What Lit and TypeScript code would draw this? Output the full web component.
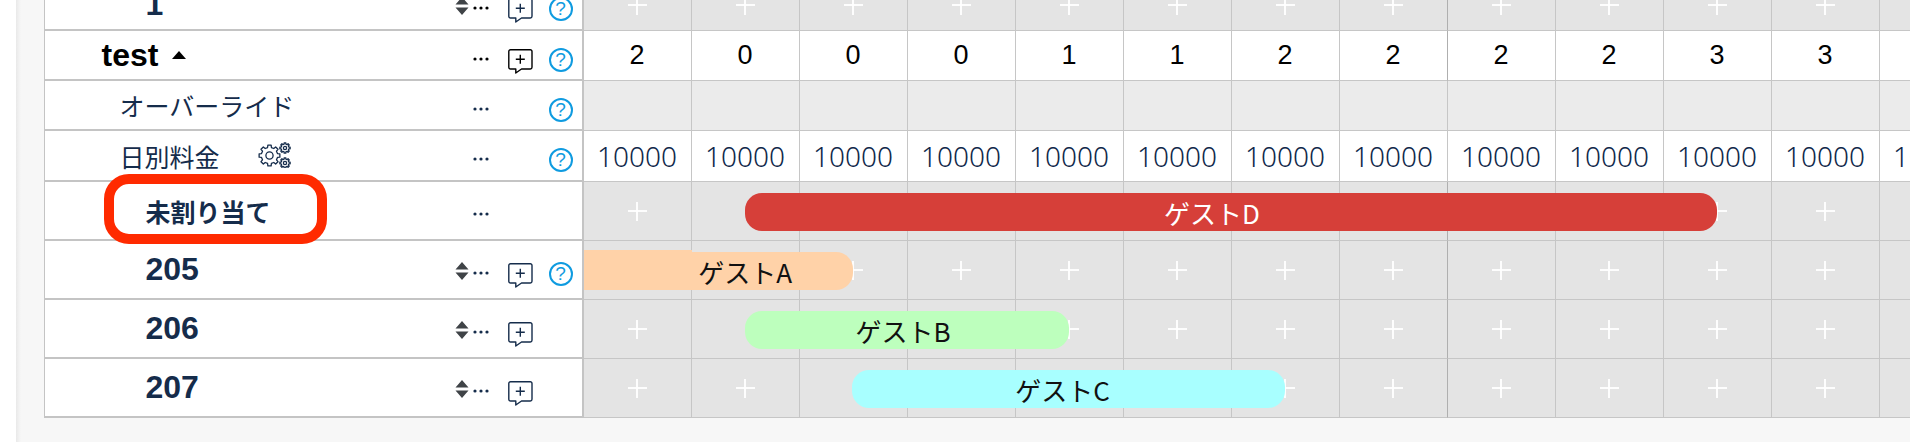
import { LitElement, html, css, svg } from "lit";
import { customElement } from "lit/decorators.js";

const COLS = 13;
const range = Array.from({ length: COLS }, (_, i) => i);

function gear(cx: number, cy: number, rOut: number, rIn: number, teeth: number, hole: number) {
  const pts: string[] = [];
  const step = (Math.PI * 2) / teeth;
  for (let i = 0; i < teeth; i++) {
    const a = i * step;
    const w = step * 0.2;
    const p = (r: number, t: number) =>
      `${(cx + r * Math.cos(t)).toFixed(2)} ${(cy + r * Math.sin(t)).toFixed(2)}`;
    pts.push(p(rIn, a - w * 1.5), p(rOut, a - w), p(rOut, a + w), p(rIn, a + w * 1.5));
  }
  return svg`<path d="M${pts.join("L")}Z"/><circle cx=${cx} cy=${cy} r=${hole}/>`;
}

const sortIcon = html`<svg class="sort" width="14" height="18" viewBox="0 0 14 18"><path d="M7 0 13.500 7.500H.5ZM7 18 .5 10.500H13.500Z" fill="#3f4347"/></svg>`;
const dots = html`<svg class="dots" width="16" height="4" viewBox="0 0 16 4"><g fill="currentColor"><circle cx="2" cy="2" r="1.600"/><circle cx="8" cy="2" r="1.600"/><circle cx="14" cy="2" r="1.600"/></g></svg>`;
const bubble = html`<svg class="bubble" width="25" height="25" viewBox="0 0 25 25"><path d="M2.500 .8H22.300a1.700 1.700 0 0 1 1.700 1.700V18.300a1.700 1.700 0 0 1-1.700 1.700H13.500L7.800 24V20H2.500A1.700 1.700 0 0 1 .8 18.300V2.500A1.700 1.700 0 0 1 2.500 .8Z" fill="none" stroke="currentColor" stroke-width="1.400" stroke-linejoin="round"/><path d="M12.300 5.700V14.700M7.800 10.200H16.800" fill="none" stroke="currentColor" stroke-width="1.400"/></svg>`;
const help = html`<span class="help">?</span>`;
const gears = html`<svg class="gears" width="33" height="26" viewBox="0 0 33 26" fill="none" stroke="#152c4b" stroke-width="1.300" stroke-linejoin="round">${gear(11.500, 13.500, 10.500, 8.200, 8, 3.600)}${gear(27, 6, 5.200, 3.900, 8, 1.600)}${gear(27, 21, 5.200, 3.900, 8, 1.600)}</svg>`;

interface Row {
  cls: string;
  name: string;
  nameCls: string;
  sort?: boolean;
  bub?: boolean;
  hlp?: boolean;
  gear?: boolean;
  caret?: boolean;
  kind: "plus" | "values" | "blank" | "rates";
  values?: number[];
  skip?: number;
}

const rows: Row[] = [
  { cls: "r-top", name: "1", nameCls: "room", sort: true, bub: true, hlp: true, kind: "plus" },
  { cls: "r-head", name: "test", nameCls: "group", bub: true, hlp: true, caret: true, kind: "values", values: [2, 0, 0, 0, 1, 1, 2, 2, 2, 2, 3, 3, 3] },
  { cls: "r-sub", name: "オーバーライド", nameCls: "sub", hlp: true, kind: "blank" },
  { cls: "r-rate", name: "日別料金", nameCls: "sub", hlp: true, gear: true, kind: "rates" },
  { cls: "r-room", name: "未割り当て", nameCls: "room small", kind: "plus", skip: 1 },
  { cls: "r-room", name: "205", nameCls: "room", sort: true, bub: true, hlp: true, kind: "plus" },
  { cls: "r-room", name: "206", nameCls: "room", sort: true, bub: true, kind: "plus", skip: 1 },
  { cls: "r-room", name: "207", nameCls: "room", sort: true, bub: true, kind: "plus", skip: 2 },
];

const bars = [
  { name: "", left: 540, top: 250, width: 108, height: 40, color: "#ffd2a8", text: "#111", shift: 0, cls: "flat" },
  { name: "ゲストA", left: 540, top: 252, width: 269.5, height: 38, color: "#ffd2a8", text: "#111", shift: 27, cls: "open" },
  { name: "ゲストD", left: 701.500, top: 193, width: 972, height: 38, color: "#d63f39", text: "#fff", shift: -19, cls: "" },
  { name: "ゲストB", left: 701.500, top: 311, width: 324, height: 38, color: "#bdffbd", text: "#111", shift: -4, cls: "" },
  { name: "ゲストC", left: 808.500, top: 370, width: 433, height: 38, color: "#a8ffff", text: "#111", shift: -6, cls: "" },
];

@customElement("app-root")
export class AppRoot extends LitElement {
  static styles = css`
    :host {
      display: block;
      width: 1910px;
      height: 442px;
      overflow: hidden;
      background: #fff;
      font-family: "Liberation Sans", "Noto Sans CJK JP", sans-serif;
    }
    .page {
      margin-left: 16px;
      height: 442px;
      background: linear-gradient(90deg, #e9e9e9 0, #f7f7f7 5px);
      padding-left: 27.500px;
      box-sizing: border-box;
      overflow: hidden;
    }
    .table {
      position: relative;
      width: 1866.500px;
      overflow: hidden;
    }
    .row {
      display: grid;
      grid-template-columns: 540px repeat(${COLS}, 108px);
      box-sizing: border-box;
    }
    .r-top { height: 55px; margin-top: -24px; padding-top: 4px; }
    .r-head { height: 50px; }
    .r-sub { height: 50px; }
    .r-rate { height: 51px; }
    .r-room { height: 59px; }
    .left {
      display: grid;
      grid-template-columns: 410px 18.500px 34.500px 41px 24.500px;
      align-items: center;
      background: #fff;
      border-left: 1.500px solid #c4c4c4;
      border-right: 2px solid #c4c4c4;
      border-bottom: 2px solid #c4c4c4;
      box-sizing: border-box;
      color: #152c4b;
      min-width: 0;
    }
    .name { display: flex; align-items: center; white-space: nowrap; }
    .name.group { padding-left: 57px; font-size: 32px; font-weight: 700; color: #000; }
    .name.sub { padding-left: 75px; font-size: 25px; font-family: "Noto Sans CJK JP", sans-serif; font-weight: 400; }
    .name.room { padding-left: 101px; font-size: 32px; font-weight: 700; }
    .name.small { font-size: 25px; font-family: "Noto Sans CJK JP", sans-serif; }
    .caret {
      width: 0;
      height: 0;
      margin-left: 14px;
      border-left: 7.500px solid transparent;
      border-right: 7.500px solid transparent;
      border-bottom: 8px solid #000;
    }
    .gears { margin-left: 38.500px; margin-top: -2px; }
    .sort, .dots, .bubble { display: block; }
    .sort { margin-top: 2px; }
    .dots { margin-top: 7px; }
    .bubble { margin-top: 12px; color: #152c4b; }
    .r-head .bubble, .r-head .dots, .r-top .dots { color: #000; }
    .help {
      display: block;
      width: 24px;
      height: 24px;
      margin-top: 9px;
      box-sizing: border-box;
      border: 2px solid #0f9be0;
      border-radius: 50%;
      color: #0f9be0;
      font-size: 19px;
      line-height: 20px;
      text-align: center;
    }
    .cell {
      display: flex;
      align-items: center;
      justify-content: center;
      border-right: 1px solid #c6c6c6;
      border-bottom: 1px solid #c6c6c6;
      box-sizing: border-box;
      min-width: 0;
    }
    .cell.month { border-right: 1.500px solid #afafaf; }
    .cell.plus { background: #e4e4e4; }
    .cell.blank { background: #ebebeb; }
    .cell.values { background: #fff; font-size: 27px; color: #000; }
    .cell.rates { background: #fff; font-size: 28px; color: #10284a; font-family: "Noto Sans", sans-serif; font-weight: 300; }
    .plus-mark { position: relative; width: 19px; height: 19px; }
    .plus-mark::before, .plus-mark::after { content: ""; position: absolute; background: #fff; opacity: .92; }
    .plus-mark::before { left: 0; right: 0; top: 8.500px; height: 2px; }
    .plus-mark::after { top: 0; bottom: 0; left: 8.500px; width: 2px; }
    .bar {
      position: absolute;
      display: flex;
      align-items: center;
      justify-content: center;
      box-sizing: border-box;
      border-radius: 17px;
      font-size: 26px;
      font-family: "Noto Sans CJK JP", sans-serif;
      white-space: nowrap;
    }
    .bar.flat { border-radius: 0; }
    .bar.open { border-radius: 0 17px 17px 0; }
    .mark {
      position: absolute;
      left: 60px;
      top: 173.500px;
      width: 223px;
      height: 70.500px;
      box-sizing: border-box;
      border: 10px solid #ff2a00;
      border-radius: 25px;
    }
  `;

  private cell(r: Row, i: number) {
    const month = i === 7 ? "month" : "";
    if (r.kind === "plus")
      return html`<div class="cell plus ${month}">${r.skip === i ? "" : html`<span class="plus-mark"></span>`}</div>`;
    if (r.kind === "values") return html`<div class="cell values ${month}">${r.values![i]}</div>`;
    if (r.kind === "rates") return html`<div class="cell rates">10000</div>`;
    return html`<div class="cell blank"></div>`;
  }

  render() {
    return html`<div class="page"><div class="table">
      ${rows.map(
        (r) => html`<div class="row ${r.cls}">
          <div class="left">
            <div class="name ${r.nameCls}">${r.name}${r.caret ? html`<span class="caret"></span>` : ""}${r.gear ? gears : ""}</div>
            <div>${r.sort ? sortIcon : ""}</div>
            <div>${dots}</div>
            <div>${r.bub ? bubble : ""}</div>
            <div>${r.hlp ? help : ""}</div>
          </div>
          ${range.map((i) => this.cell(r, i))}
        </div>`
      )}
      ${bars.map(
        (b) => html`<div class="bar ${b.cls}" style="left:${b.left}px;top:${b.top}px;width:${b.width}px;height:${b.height}px;background:${b.color};color:${b.text};padding-left:${Math.max(b.shift * 2, 0)}px;padding-right:${Math.max(-b.shift * 2, 0)}px">${b.name}</div>`
      )}
      <div class="mark"></div>
    </div></div>`;
  }
}
